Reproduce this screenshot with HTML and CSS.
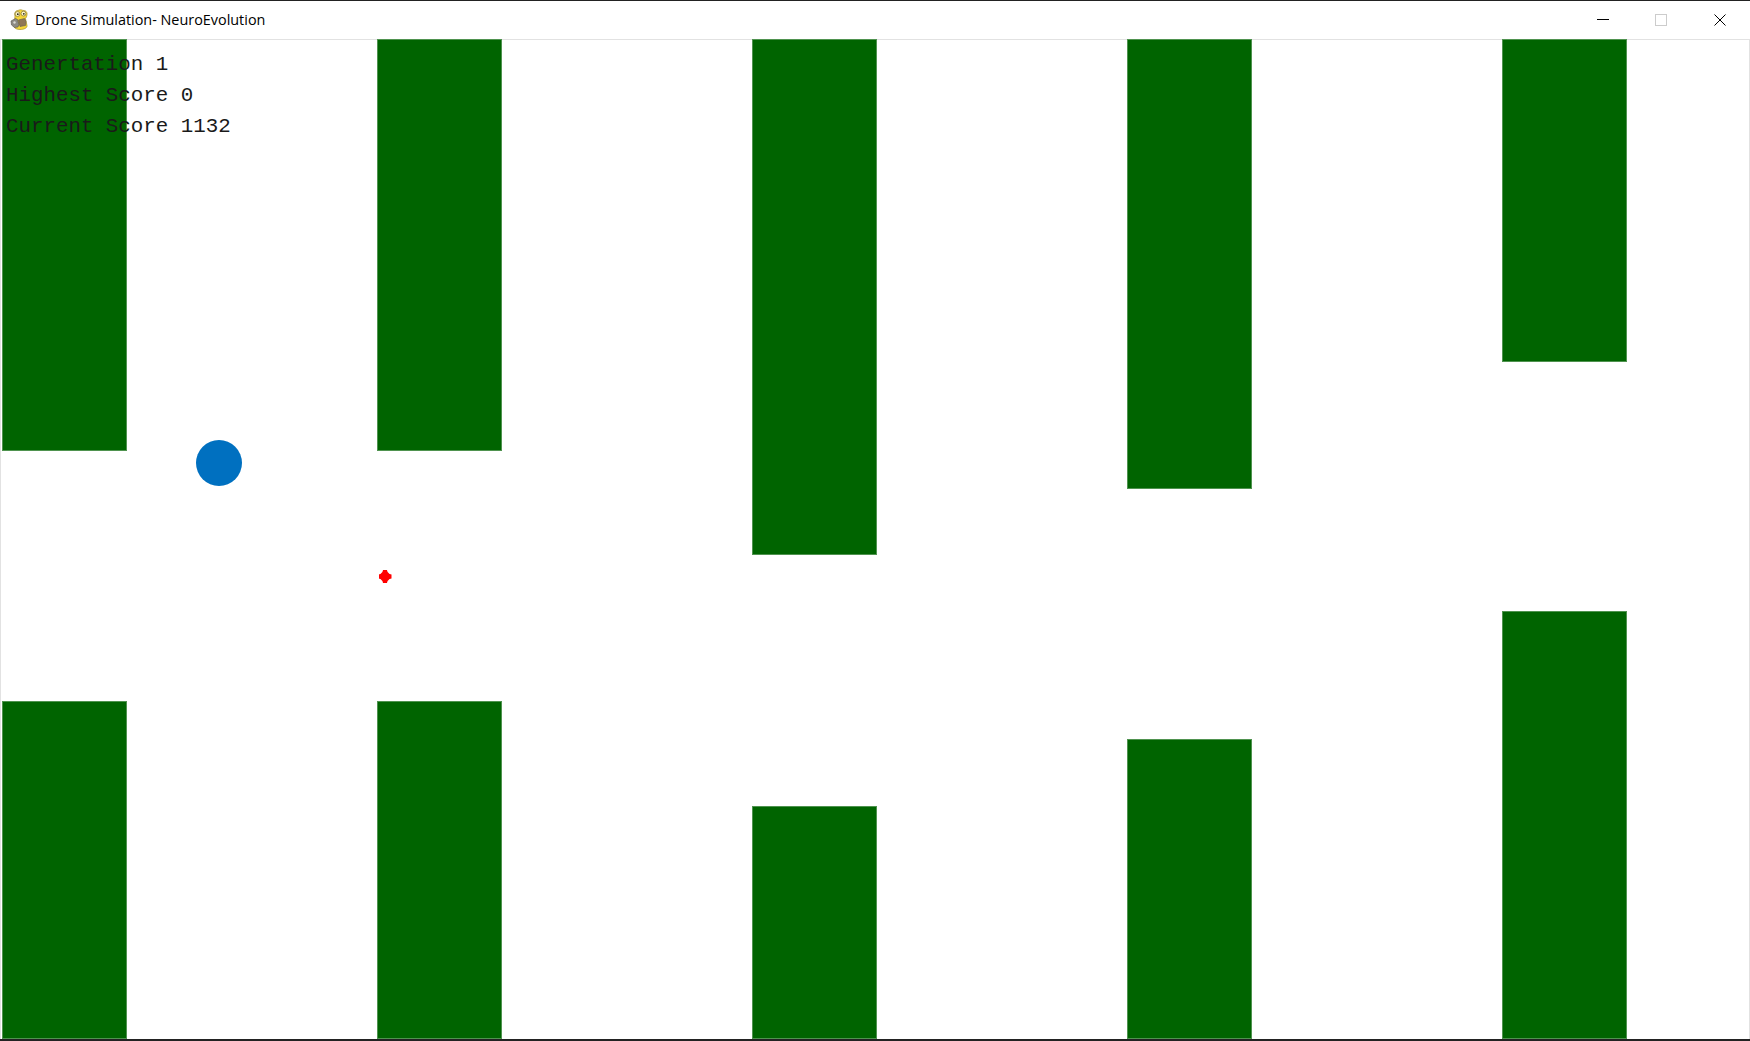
FILE: index.html
```html
<!DOCTYPE html>
<html lang="en">
<head>
    <meta charset="UTF-8">
    <title>Drone Simulation- NeuroEvolution</title>
    <link rel="stylesheet" href="styles.css">
</head>
<body>
    <div class="window">
        <div class="titlebar">
            <svg class="app-icon" width="20" height="22" viewBox="0 0 20 22">
                <path d="M5 7C4 4 5.500 1.500 8 1.500c1.500-1 3.500-1 5 0 2.500-.5 4.500 1.500 4 4.500-.2 1.500-.8 2.500-1.500 3.500l1.500 7c.5 2.500-3 4-7 4-3 0-5.500-1-6-3z" fill="#f4d538" stroke="#a8902a" stroke-width=".7"/>
                <circle cx="7.500" cy="5" r="2.400" fill="#fff6c0" stroke="#6b6030" stroke-width=".6"/>
                <circle cx="13.500" cy="4.600" r="2.400" fill="#fff6c0" stroke="#6b6030" stroke-width=".6"/>
                <circle cx="7.800" cy="5.200" r=".9" fill="#222"/>
                <circle cx="13.800" cy="4.800" r=".9" fill="#222"/>
                <path d="M1 12l4.500-2.500 2 1 1.500 5-1 2.500-3.500 .5L1.500 16z" fill="#8d8a83" stroke="#56534c" stroke-width=".6"/>
                <path d="M8.500 11l6-1.500 1.500 3-.5 4-5.500 1z" fill="#8f7657" stroke="#5f5a50" stroke-width=".6"/>
                <circle cx="4.500" cy="13.500" r="1.200" fill="#d8d8d4"/>
            </svg>
            <span class="title">Drone Simulation- NeuroEvolution</span>
            <div class="controls">
                <span class="control">
                    <svg width="12" height="12" viewBox="0 0 12 12"><path d="M0 5.500h12" stroke="#000" fill="none"/></svg>
                </span>
                <span class="control">
                    <svg width="12" height="12" viewBox="0 0 12 12"><rect x=".5" y=".5" width="11" height="11" stroke="#ccc" fill="none"/></svg>
                </span>
                <span class="control">
                    <svg width="12" height="12" viewBox="0 0 12 12"><path d="M.5 .5l11 11M11.500 .5l-11 11" stroke="#000" fill="none"/></svg>
                </span>
            </div>
        </div>
        <div class="game">
            <div class="pipe-column">
                <div class="pipe pipe-a-top"></div>
                <div class="pipe pipe-a-bottom"></div>
            </div>
            <div class="pipe-column">
                <div class="pipe pipe-a-top"></div>
                <div class="pipe pipe-a-bottom"></div>
            </div>
            <div class="pipe-column">
                <div class="pipe pipe-b-top"></div>
                <div class="pipe pipe-b-bottom"></div>
            </div>
            <div class="pipe-column">
                <div class="pipe pipe-c-top"></div>
                <div class="pipe pipe-c-bottom"></div>
            </div>
            <div class="pipe-column">
                <div class="pipe pipe-d-top"></div>
                <div class="pipe pipe-d-bottom"></div>
            </div>

            <div class="hud">
                <div>Genertation 1</div>
                <div>Highest Score 0</div>
                <div>Current Score 1132</div>
            </div>
            <div class="drone"></div>
            <div class="target"></div>
        </div>
    </div>
</body>
</html>
```

FILE: styles.css
```css
body {
    margin: 0;
    overflow: hidden;
    background: #fff;
}

.window {
    display: flex;
    flex-direction: column;
    height: 1041px;
    box-sizing: border-box;
    border-top: 1px solid #222;
    border-bottom: 2px solid #222;
}

.titlebar {
    display: flex;
    align-items: center;
    flex: none;
    height: 38px;
    padding-left: 10px;
    font-family: "Open Sans", "Noto Sans", sans-serif;
    font-size: 14.4px;
    color: #000;
}

.app-icon {
    margin-right: 5px;
}

.title {
    margin-bottom: 2px;
}

.controls {
    display: flex;
    margin-left: auto;
    padding-right: 1px;
}

.control {
    display: flex;
    align-items: center;
    justify-content: center;
    width: 58.5px;
    height: 38px;
}

/* window edge lines sit under the pipes */
.game {
    position: relative;
    flex: 1;
    display: flex;
    gap: 250px;
    padding-left: 2px;
    box-shadow: inset 1px 1px 0 #e2e2e2, inset -1px 0 0 #e2e2e2;
    overflow: hidden;
}

.pipe-column {
    display: flex;
    flex-direction: column;
    justify-content: space-between;
    flex: none;
    width: 125px;
}

.pipe {
    background: #006400;
    box-shadow: inset 0 0 0 1px #4f934f;
}

.pipe-a-top { height: 412px; }
.pipe-a-bottom { height: 338px; }
.pipe-b-top { height: 516px; }
.pipe-b-bottom { height: 233px; }
.pipe-c-top { height: 450px; }
.pipe-c-bottom { height: 300px; }
.pipe-d-top { height: 323px; }
.pipe-d-bottom { height: 428px; }

.hud {
    position: absolute;
    top: 10px;
    left: 6px;
    font-family: "Liberation Mono", monospace;
    font-size: 20.8px;
    line-height: 31px;
    color: #1a1a1a;
}

.drone {
    position: absolute;
    left: 196px;
    top: 401px;
    width: 46px;
    height: 46px;
    border-radius: 50%;
    background: #0070c0;
}

.target {
    position: absolute;
    left: 378.500px;
    top: 531px;
    width: 13px;
    height: 13px;
    background: #f00;
    clip-path: polygon(35% 0, 65% 0, 70% 15%, 85% 30%, 100% 35%, 100% 65%, 85% 70%, 70% 85%, 65% 100%, 35% 100%, 30% 85%, 15% 70%, 0 65%, 0 35%, 15% 30%, 30% 15%);
}
```
